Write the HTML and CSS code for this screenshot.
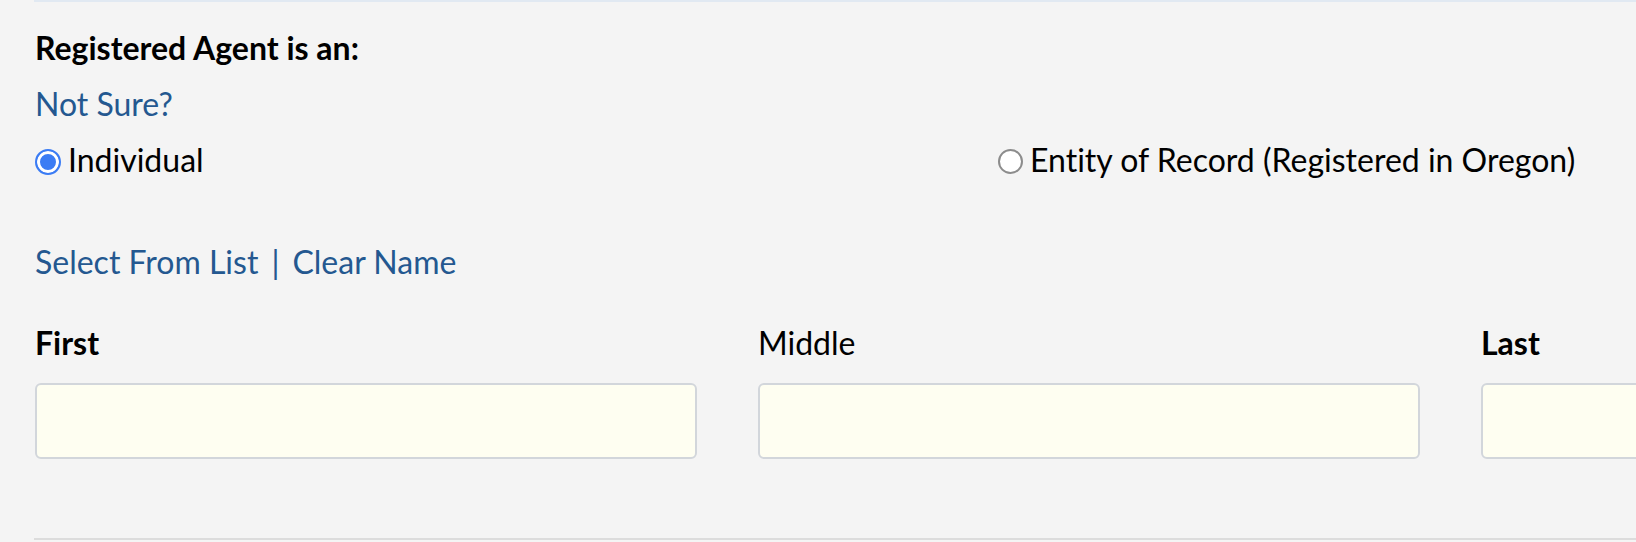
FILE: index.html
```html
<!DOCTYPE html>
<html lang="en">
<head>
<meta charset="utf-8">
<title>Registered Agent</title>
<link rel="stylesheet" href="styles.css">
</head>
<body>
<div class="page">
  <section class="agent-section">
    <h2 class="section-title">Registered Agent is an:</h2>
    <a class="link not-sure" href="#">Not Sure?</a>
    <div class="radio-row">
      <label class="radio-option">
        <input type="radio" name="agentType" class="radio" checked>
        <span class="radio-text">Individual</span>
      </label>
      <label class="radio-option">
        <input type="radio" name="agentType" class="radio">
        <span class="radio-text">Entity of Record (Registered in Oregon)</span>
      </label>
    </div>
    <div class="name-actions">
      <a class="link" href="#">Select From List</a><span class="sep">|</span><a class="link" href="#">Clear Name</a>
    </div>
    <div class="name-fields">
      <div class="field">
        <label class="field-label bold">First</label>
        <input type="text" class="text-input">
      </div>
      <div class="field">
        <label class="field-label">Middle</label>
        <input type="text" class="text-input">
      </div>
      <div class="field">
        <label class="field-label bold">Last</label>
        <input type="text" class="text-input">
      </div>
    </div>
  </section>
</div>
</body>
</html>
```

FILE: styles.css
```css
html, body {
  margin: 0;
  padding: 0;
  background: #f4f4f4;
  overflow: hidden;
}

body {
  font-family: Lato, "Open Sans", "Liberation Sans", sans-serif;
  font-size: 32px;
  line-height: 40px;
  font-variant-ligatures: none;
  color: #000;
  width: 1636px;
  height: 542px;
}

.page {
  padding-left: 34px;
}

.agent-section {
  border-top: 2px solid #e1e9f2;
  border-bottom: 2px solid #dcdcdc;
  padding: 26px 0 79px 1px;
  width: 2200px;
}

.section-title {
  margin: 0;
  font-size: 32px;
  line-height: 40px;
  font-weight: 700;
}

.link {
  color: #245890;
  text-decoration: none;
}

.not-sure {
  display: block;
  margin-top: 16px;
}

.radio-row {
  display: grid;
  grid-template-columns: 963px auto;
  margin-top: 16px;
  height: 40px;
}

.radio-option {
  display: flex;
  align-items: center;
  gap: 7px;
}

.radio {
  appearance: none;
  -webkit-appearance: none;
  margin: 3px 0 0 0;
  width: 25px;
  height: 25px;
  border: 2px solid #8c8c8c;
  border-radius: 50%;
  background: #fff;
  box-sizing: border-box;
  flex: none;
}

.radio:checked {
  width: 26px;
  height: 26px;
  border: 2px solid #3b7cf4;
  background: #3b7cf4;
  box-shadow: inset 0 0 0 3px #fff;
}

.name-actions {
  margin-top: 62px;
  color: #245890;
}

.sep {
  margin: 0 13px 0 13px;
}

.name-fields {
  display: grid;
  grid-template-columns: repeat(3, 662px);
  column-gap: 61px;
  margin-top: 41px;
}

.field {
  display: flex;
  flex-direction: column;
}

.field-label {
  display: block;
  margin-bottom: 20px;
}

.field-label.bold {
  font-weight: 700;
}

.text-input {
  box-sizing: border-box;
  width: 662px;
  height: 76px;
  margin: 0;
  border: 2px solid #d2d6db;
  border-radius: 6px;
  background: #fefef1;
  font: inherit;
  padding: 0 16px;
}
```
